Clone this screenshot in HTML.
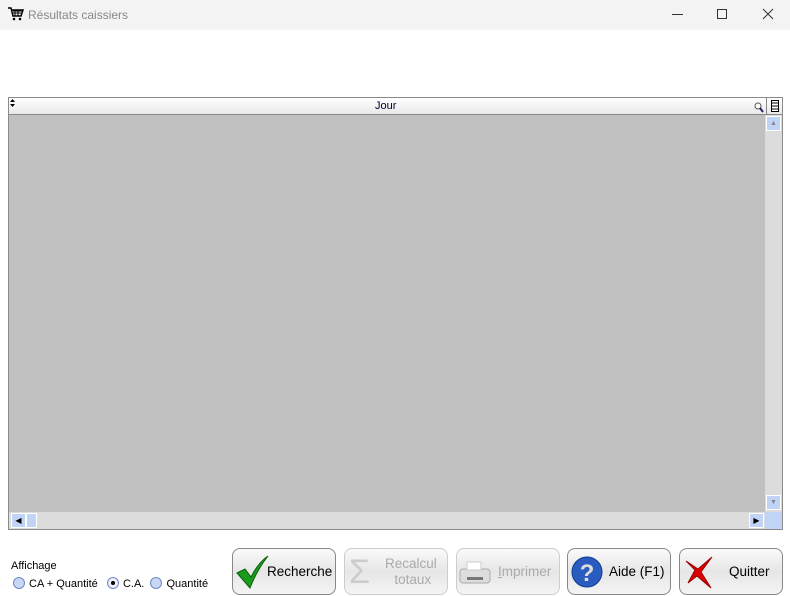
<!DOCTYPE html>
<html><head><meta charset="utf-8"><style>
*{margin:0;padding:0;box-sizing:border-box}
body{width:790px;height:596px;background:#fff;font-family:"Liberation Sans",sans-serif;font-size:12px;position:relative;overflow:hidden}
.tb{position:absolute;left:0;top:0;width:790px;height:30px;background:#f3f3f3}
.tb .t{position:absolute;left:28px;top:8px;color:#888;font-size:12px}
.ab{position:absolute}
.grid{position:absolute;left:8px;top:97px;width:775px;height:433px;border:1px solid #8a8a8a;background:#c0c0c0}
.hdr{position:absolute;left:0;top:0;width:773px;height:17px;background:linear-gradient(#fff,#e8e8e8);border-bottom:1px solid #8a8a8a}
.hdr .j{position:absolute;left:366px;top:2px;font-size:11px;color:#003}
.vs{position:absolute;left:756px;top:17px;width:17px;height:397px;background:#dcdcdc}
.hs{position:absolute;left:0;top:414px;width:773px;height:17px;background:#dcdcdc}
.sb{position:absolute;width:15px;height:15px;background:#c0d4f8;border:1px solid #fff}
.btn{position:absolute;top:548px;height:47px;width:104px;border:1px solid #888;border-radius:8px;background:linear-gradient(#fafafa,#e6e6e6 50%,#f4f4f4);font-size:13.5px}
.btn.d{border-color:#ccc;color:#aaa}
.btn span{position:absolute}
.r{display:inline-block;width:12px;height:12px;border-radius:50%;border:1px solid #7088c0;background:#c8d8f4;vertical-align:-2px;margin-right:4px;position:relative}
</style></head><body>
<div class="tb">
<svg class="ab" style="left:8px;top:7px" width="16" height="14" viewBox="0 0 16 14"><path d="M0 1h3l2 8h8l2-6H4" fill="none" stroke="#000" stroke-width="1.5"/><path d="M5 4h9M5 6h8M7 3v6M10 3v6" stroke="#000"/><circle cx="6" cy="12" r="1.3"/><circle cx="12" cy="12" r="1.3"/></svg>
<div class="t">Résultats caissiers</div>
<div class="ab" style="left:672px;top:14px;width:11px;height:1px;background:#333"></div>
<div class="ab" style="left:717px;top:9px;width:10px;height:10px;border:1px solid #333"></div>
<svg class="ab" style="left:762px;top:8px" width="12" height="12"><path d="M1 1L11 11M11 1L1 11" stroke="#333"/></svg>
</div>
<div class="grid">
<div class="hdr"><svg class="ab" style="left:1px;top:1px" width="5" height="8"><path d="M0 3L2.5 0 5 3zM0 5L2.5 8 5 5z"/></svg><span class="j">Jour</span>
<svg class="ab" style="left:745px;top:4px" width="10" height="11"><circle cx="4" cy="4" r="3" fill="#fff" stroke="#555"/><path d="M6 6l3 4" stroke="#226" stroke-width="2"/></svg>
<div class="ab" style="left:757px;top:0;width:16px;height:17px;border-left:1px solid #888"><svg class="ab" style="left:4px;top:2px" width="8" height="12"><rect x="0.5" y="0.5" width="7" height="11" fill="#fff" stroke="#000"/><path d="M1 3h6M1 6h6M1 9h6" stroke="#000"/></svg></div></div>
<div class="vs"><div class="sb" style="left:1px;top:1px;font-size:7px;color:#888;text-align:center;line-height:13px">▲</div><div class="sb" style="left:1px;top:380px;font-size:7px;color:#888;text-align:center;line-height:13px">▼</div></div>
<div class="hs"><div class="sb" style="left:2px;top:1px;font-size:8px;text-align:center;line-height:13px">◀</div><div class="sb" style="left:17px;top:1px;width:11px"></div><div class="sb" style="left:740px;top:1px;font-size:8px;text-align:center;line-height:13px">▶</div><div class="sb" style="left:756px;top:0;width:17px;height:17px;border:none"></div></div>
</div>
<div class="ab" style="left:11px;top:560px;font-size:11px">Affichage</div>
<div class="ab" style="left:13px;top:577px;font-size:11px;white-space:nowrap"><span class="r"></span>CA + Quantité &nbsp;&nbsp;<span class="r" style="background:#eef"><span class="ab" style="left:3px;top:3px;width:4px;height:4px;background:#000;border-radius:50%"></span></span>C.A. &nbsp;<span class="r"></span>Quantité</div>
<div class="btn" style="left:232px"><svg class="ab" style="left:2px;top:6px" width="34" height="34"><path d="M2 18l8-4 6 8C21 12 27 5 33 1 26 10 20 20 15 33z" fill="#1a9a1a" stroke="#0a600a"/></svg><span style="left:34px;top:15px">Recherche</span></div>
<div class="btn d" style="left:344px"><span style="left:4px;top:4px;font-size:34px;color:#ccc">Σ</span><span style="left:40px;top:7px;text-align:center;line-height:16px">Recalcul<br>&nbsp;totaux</span></div>
<div class="btn d" style="left:456px"><svg class="ab" style="left:2px;top:12px" width="32" height="26"><rect x="1" y="8" width="30" height="14" rx="3" fill="#ddd" stroke="#aaa"/><rect x="8" y="1" width="14" height="8" fill="#fff" stroke="#ccc"/><rect x="8" y="16" width="16" height="3" fill="#777"/></svg><span style="left:41px;top:15px"><u>I</u>mprimer</span></div>
<div class="btn" style="left:567px"><svg class="ab" style="left:2px;top:6px" width="34" height="34"><circle cx="17" cy="17" r="15" fill="#2a5cc0" stroke="#123a8a"/><text x="17" y="26" text-anchor="middle" font-size="24" font-weight="bold" fill="#ddd" font-family="Liberation Sans">?</text></svg><span style="left:41px;top:15px">Aide (F1)</span></div>
<div class="btn" style="left:679px"><svg class="ab" style="left:4px;top:6px" width="34" height="34"><path d="M2 6l12 8 14-12-11 15 10 16-14-12L4 28l7-13z" fill="#d00" stroke="#900"/></svg><span style="left:49px;top:15px">Quitter</span></div>
</body></html>
